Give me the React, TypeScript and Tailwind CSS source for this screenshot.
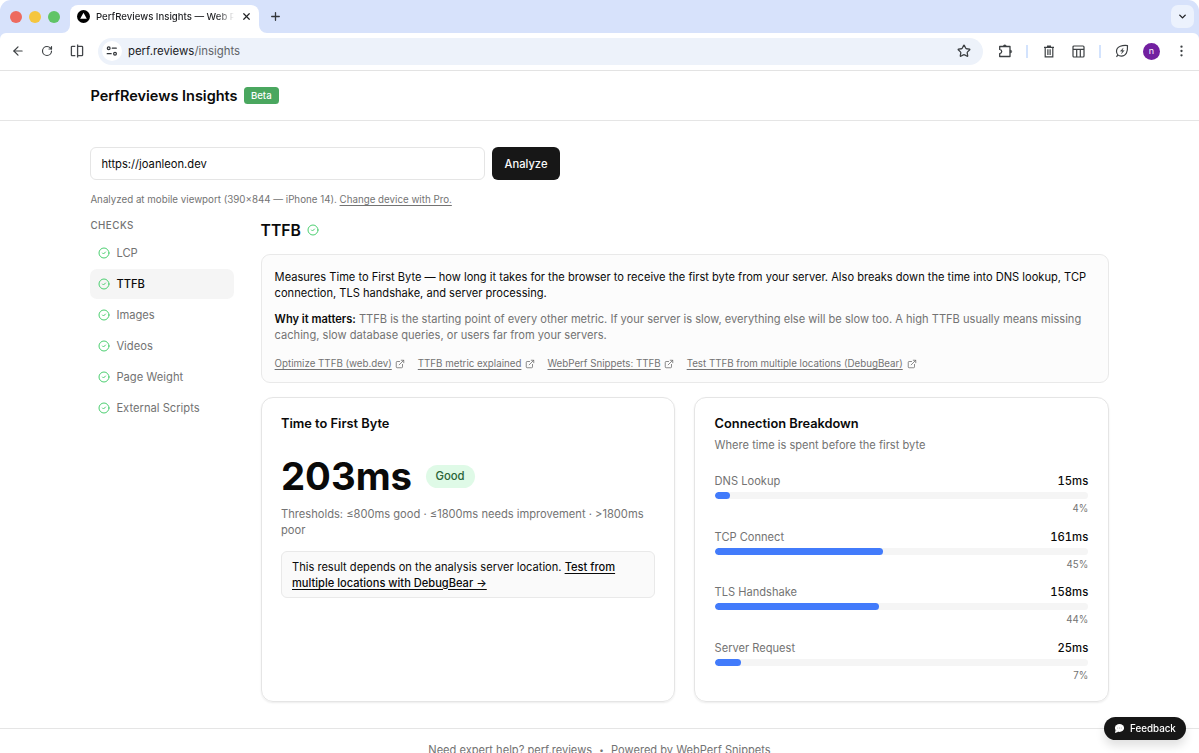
import React from "react";
import { ArrowLeft, RotateCw, X, Plus, ChevronDown, Star, ExternalLink } from "lucide-react";

const checks = ["LCP", "TTFB", "Images", "Videos", "Page Weight", "External Scripts"];

const links = [
  { label: "Optimize TTFB (web.dev)", width: "w-[117px]" },
  { label: "TTFB metric explained", width: "w-[103.5px]" },
  { label: "WebPerf Snippets: TTFB", width: "w-[113px]" },
  { label: "Test TTFB from multiple locations (DebugBear)", width: "w-[216.5px]" },
];

const phases = [
  { name: "DNS Lookup", time: "15ms", share: 4 },
  { name: "TCP Connect", time: "161ms", share: 45 },
  { name: "TLS Handshake", time: "158ms", share: 44 },
  { name: "Server Request", time: "25ms", share: 7 },
];

function CheckIcon() {
  return (
    <svg viewBox="0 0 12 12" className="size-[12px] shrink-0 text-[#4bcf70]" fill="none" stroke="currentColor" strokeLinecap="round" strokeLinejoin="round">
      <circle cx="6" cy="6" r="5" strokeWidth="1" />
      <path d="m4.5 6 1 1 2-2" strokeWidth="1" />
    </svg>
  );
}

function TuneIcon() {
  return (
    <svg viewBox="0 0 12 12" className="size-[12px]" fill="none" stroke="#33363a" strokeWidth="1.2" strokeLinecap="round">
      <circle cx="2.7" cy="3.2" r="1.4" />
      <path d="M6.3 3.2h4M1.2 8.7h4" />
      <circle cx="9" cy="8.7" r="1.4" />
    </svg>
  );
}

function SplitIcon() {
  return (
    <svg viewBox="0 0 14 14" className="size-[14px]" fill="none" stroke="#44474b" strokeWidth="1.3">
      <path d="M5.3 2.3H2.2a.8.8 0 0 0-.8.8v7.8a.8.8 0 0 0 .8.8h3.1M7.6.5v13M7.6 2.3h4.2a.8.8 0 0 1 .8.8v7.8a.8.8 0 0 1-.8.8H7.6" />
    </svg>
  );
}

function PuzzleIcon() {
  return (
    <svg viewBox="0 0 15 15" className="size-[15px]" fill="none" stroke="#3c4043" strokeWidth="1.3" strokeLinejoin="round">
      <path d="M1.7 2.5H12v10H1.7V9.6c2.7-.4 2.7-3.8 0-4.2z" />
      <path d="M5.3 2.3a1.5 1.5 0 0 1 3 0zM12.2 6a1.5 1.5 0 0 1 0 3z" fill="#3c4043" strokeWidth=".5" />
    </svg>
  );
}

function TrashIcon() {
  return (
    <svg viewBox="0 0 12 13" className="h-[13px] w-[12px]" fill="none" stroke="#3c4043" strokeWidth="1.2">
      <path d="M1 2.3h10M4 1.2h4M2.2 2.5v9.300h7.600V2.500M4.900 4.300v5.600M7.100 4.300v5.600" />
    </svg>
  );
}

function TableIcon() {
  return (
    <svg viewBox="0 0 13 13" className="size-[13px]" fill="none" stroke="#3c4043" strokeWidth="1.2">
      <rect x="1" y="1" width="11" height="11" rx="1" />
      <path d="M1 4.3h11M4.700 4.300V12M8.300 4.300V12" />
    </svg>
  );
}

function LeafIcon() {
  return (
    <svg viewBox="0 0 14 14" className="size-[14px]" fill="none" stroke="#3c4043" strokeWidth="1.2" strokeLinejoin="round">
      <path d="M12.500 1.600C8 1.100 1.500 2 1.500 7.300c0 3 2.200 4.800 4.800 4.800 4.900 0 6.500-4 6.200-10.500zM3 10.600l-1.500 2.200" />
      <path d="M8.300 3.900 5.200 7.300h2.100L6.300 10l3.100-3.500H7.400z" fill="#3c4043" strokeWidth=".2" />
    </svg>
  );
}

function BrowserChrome() {
  return (
    <div className="shrink-0 bg-white">
      <div className="flex h-[33px] rounded-t-[11px] bg-[#d7e2fb] pt-[5px]">
        <div className="flex h-[23px] w-[70px] items-center gap-[7px] pl-[10px]">
          <span className="size-[12px] rounded-full bg-[#ed6a5f]" />
          <span className="size-[12px] rounded-full bg-[#f5c63f]" />
          <span className="size-[12px] rounded-full bg-[#60c466]" />
        </div>
        <div className="relative flex h-[28px] w-[189px] items-center rounded-t-[8px] bg-white pb-[5px] pl-[7px]">
          <svg viewBox="0 0 8 8" className="absolute -left-[8px] bottom-0 size-[8px]" fill="#fff"><path d="M8 0v8H0a8 8 0 0 0 8-8z" /></svg>
          <svg viewBox="0 0 8 8" className="absolute -right-[8px] bottom-0 size-[8px]" fill="#fff"><path d="M0 0v8h8a8 8 0 0 1-8-8z" /></svg>
          <svg viewBox="0 0 13 13" className="size-[13px] shrink-0">
            <circle cx="6.5" cy="6.5" r="6.5" fill="#000" />
            <path d="M6.5 2.800 9.800 8.800H3.200z" fill="#fff" />
          </svg>
          <div className="ml-[6px] w-[138px] shrink-0 overflow-hidden whitespace-nowrap bg-gradient-to-r from-[#202124] from-88% to-transparent bg-clip-text text-[9.6px] font-[450] leading-[16px] text-transparent">
            PerfReviews Insights — Web P
          </div>
          <X className="ml-[6.5px] size-[11px] shrink-0 text-[#202124]" strokeWidth={2.6} />
        </div>
        <Plus className="ml-[10px] mt-[5px] size-[13px] text-[#33363a]" strokeWidth={2.4} />
        <div className="ml-auto mr-[5px] flex size-[23px] items-center justify-center rounded-[7px] bg-[#ecf2fd]">
          <ChevronDown className="size-[11px] text-[#202124]" strokeWidth={3} />
        </div>
      </div>
      <div className="bg-[#d7e2fb]">
        <div className="flex h-[38px] items-center rounded-t-[6px] border-b border-[#e3e3e3] bg-white pb-px pl-[11px]">
          <ArrowLeft className="size-[14px] text-[#3c4043]" strokeWidth={2.1} />
          <RotateCw className="ml-[16px] size-[12px] text-[#3c4043]" strokeWidth={2.3} />
          <div className="ml-[17px]"><SplitIcon /></div>
          <div className="ml-[14px] flex h-[27px] w-[885px] items-center rounded-full bg-[#edf2fa] pl-[4px] pr-[12px]">
            <span className="flex size-[20px] items-center justify-center rounded-full bg-white"><TuneIcon /></span>
            <span className="ml-[6px] text-[11.4px] leading-[18px] text-[#202124]">perf.reviews<span className="text-[#5f6368]">/insights</span></span>
            <Star className="ml-auto size-[14px] text-[#3c4043]" strokeWidth={2.2} />
          </div>
          <div className="ml-[15px]"><PuzzleIcon /></div>
          <span className="ml-[13px] h-[13px] w-[2px] bg-[#d3e3fd]" />
          <div className="ml-[15px]"><TrashIcon /></div>
          <div className="ml-[17px]"><TableIcon /></div>
          <span className="ml-[14px] h-[13px] w-[2px] bg-[#d3e3fd]" />
          <div className="ml-[14px]"><LeafIcon /></div>
          <span className="ml-[14px] flex size-[17px] items-center justify-center rounded-full bg-[#7220a0] pb-px text-[9px] text-white">n</span>
          <svg viewBox="0 0 3 12" className="ml-[19.5px] h-[12px] w-[3px]" fill="#3c4043">
            <circle cx="1.5" cy="1.7" r="1.15" /><circle cx="1.5" cy="6" r="1.15" /><circle cx="1.5" cy="10.3" r="1.15" />
          </svg>
        </div>
      </div>
    </div>
  );
}

function Phase({ name, time, share }: { name: string; time: string; share: number }) {
  return (
    <div className="h-[55.5px]">
      <div className="flex justify-between leading-[16px]">
        <span className="text-[#737373]">{name}</span>
        <span className="text-[11.3px] font-medium tabular-nums">{time}</span>
      </div>
      <div className="mt-[3px] h-[7px] overflow-hidden rounded-full bg-[#f5f5f5]">
        <div className="h-full rounded-full bg-[#427bfb]" style={{ width: share + "%" }} />
      </div>
      <div className="mt-[3px] text-right text-[9.7px] leading-[13px] text-[#737373]">{share}%</div>
    </div>
  );
}

export default function App() {
  return (
    <div className="flex h-[753px] w-[1199px] flex-col overflow-hidden bg-white font-['Inter',sans-serif] text-[11.1px] text-[#0a0a0a]">
      <BrowserChrome />
      <header className="flex h-[50px] shrink-0 items-center border-b border-[#e5e5e5] pl-[90.5px]">
        <h1 className="w-[153.5px] whitespace-nowrap text-[14.5px] font-semibold leading-[22px]">PerfReviews Insights</h1>
        <span className="flex h-[17px] w-[34.5px] items-center justify-center rounded-[3.5px] bg-[#4aa75f] pt-px text-[9.6px] font-medium text-white">Beta</span>
      </header>
      <main className="h-[607px] shrink-0 pl-[90.4px] pr-[90.4px] pt-[26px]">
        <div className="flex gap-[7px]">
          <div className="flex h-[33px] w-[394.6px] items-center rounded-[6px] border border-[#e5e5e5] px-[10px] pt-px text-[11.2px]">https://joanleon.dev</div>
          <button className="h-[33px] w-[68px] rounded-[6px] bg-[#171717] pt-px text-[11.2px] font-medium text-[#fafafa]">Analyze</button>
        </div>
        <p className="mt-[13px] whitespace-nowrap text-[9.75px] leading-[14px] text-[#737373]">
          Analyzed at mobile viewport (390×844 — iPhone 14).{" "}
          <a className="underline underline-offset-2">Change device with Pro.</a>
        </p>
        <div className="flex justify-between pt-[11px]">
          <aside className="w-[143.6px]">
            <h2 className="mb-[5px] pt-px text-[9.8px] font-medium leading-[14px] tracking-[0.5px] text-[#737373]">CHECKS</h2>
            <nav className="flex flex-col gap-[1px]">
              {checks.map((name) => (
                <div key={name} className={name === "TTFB" ? "flex h-[30px] items-center gap-[6px] rounded-[7px] bg-[#f5f5f5] pl-[8px] font-medium" : "flex h-[30px] items-center gap-[6px] pl-[8px] text-[#737373]"}>
                  <CheckIcon />
                  <span className="pt-px text-[11.2px] leading-[17px]">{name}</span>
                </div>
              ))}
            </nav>
          </aside>
          <section className="w-[848px]">
            <div className="flex h-[24px] items-center gap-[6px]">
              <h2 className="w-[40px] pt-px text-[15.7px] font-semibold leading-[24px]">TTFB</h2>
              <CheckIcon />
            </div>
            <div className="mt-[12px] h-[129px] whitespace-nowrap rounded-[9px] border border-[#e9e9e9] bg-[#fcfcfc] pl-[13px] pt-[14px] leading-[16.3px]">
              <p>
                Measures Time to First Byte — how long it takes for the browser to receive the first byte from your server. Also breaks down the time into DNS lookup, TCP<br />
                connection, TLS handshake, and server processing.
              </p>
              <p className="mt-[9.5px] text-[#737373]">
                <span className="font-semibold text-[#0a0a0a]">Why it matters:</span> TTFB is the starting point of every other metric. If your server is slow, everything else will be slow too. A high TTFB usually means missing<br />
                caching, slow database queries, or users far from your servers.
              </p>
              <div className="mt-[13.5px] flex gap-[12.7px] text-[9.74px] leading-[14px] text-[#737373]">
                {links.map((link) => (
                  <a key={link.label} className="flex items-center gap-[3.5px]">
                    <span className={link.width + " underline underline-offset-2"}>{link.label}</span>
                    <ExternalLink className="size-[10px]" strokeWidth={2} />
                  </a>
                ))}
              </div>
            </div>
            <div className="mt-[13.5px] flex justify-between">
              <div className="h-[305px] w-[414.4px] rounded-[12px] border border-[#e5e5e5] px-[19.4px] pt-[18.5px] shadow-[0_1px_2px_rgba(0,0,0,0.08)]">
                <h3 className="text-[12.8px] font-semibold leading-[16px]">Time to First Byte</h3>
                <div className="mt-[24px] flex h-[41px] items-center">
                  <span className="w-[144.5px] whitespace-nowrap text-[38.3px] font-bold leading-[41px]">203ms</span>
                  <span className="mb-px flex h-[23px] w-[49px] items-center justify-center rounded-full bg-[#dffae7] pt-px text-[11.3px] font-medium text-[#2a6438]">Good</span>
                </div>
                <p className="mt-[9px] whitespace-nowrap text-[11.15px] leading-[16.3px] text-[#737373]">Thresholds: ≤800ms good · ≤1800ms needs improvement · &gt;1800ms<br />poor</p>
                <div className="mt-[12.500px] h-[47px] whitespace-nowrap rounded-[6px] border border-[#e9e9e9] bg-[#fafafa] pl-[10px] pt-[6.5px] leading-[16.3px]">
                  This result depends on the analysis server location. <a className="font-medium underline underline-offset-2">Test from<br />multiple locations with DebugBear →</a>
                </div>
              </div>
              <div className="h-[305px] w-[414.4px] rounded-[12px] border border-[#e5e5e5] px-[19.4px] pt-[18.5px] shadow-[0_1px_2px_rgba(0,0,0,0.08)]">
                <h3 className="text-[12.8px] font-semibold leading-[16px]">Connection Breakdown</h3>
                <p className="mt-[5px] leading-[16px] text-[#737373]">Where time is spent before the first byte</p>
                <div className="mt-[20px]">
                  {phases.map((phase) => <Phase key={phase.name} {...phase} />)}
                </div>
              </div>
            </div>
          </section>
        </div>
      </main>
      <footer className="flex shrink-0 justify-center whitespace-pre border-t border-[#e5e5e5] pt-[13px] leading-[16px] text-[#737373]">
        <span>Need expert help? perf.reviews</span>
        <span className="w-[19px] text-center text-[8px]">•</span>
        <span>Powered by WebPerf Snippets</span>
      </footer>
      <button className="fixed bottom-[13px] right-[13px] flex h-[23px] w-[82px] items-center rounded-full bg-[#171717] pl-[10px] pt-px text-[9.8px] font-medium text-white shadow-[0_6px_10px_rgba(0,0,0,0.12)]">
        <svg viewBox="0 0 12 12" className="mb-px mr-[5px] size-[11px]" fill="#fff">
          <ellipse cx="6" cy="5.5" rx="5" ry="4.3" /><path d="M1.8 7.5 1 11l4-1.5z" />
          <path d="M3.5 5.5h5" stroke="#aaa" strokeDasharray="1 1" />
        </svg>
        Feedback
      </button>
    </div>
  );
}
